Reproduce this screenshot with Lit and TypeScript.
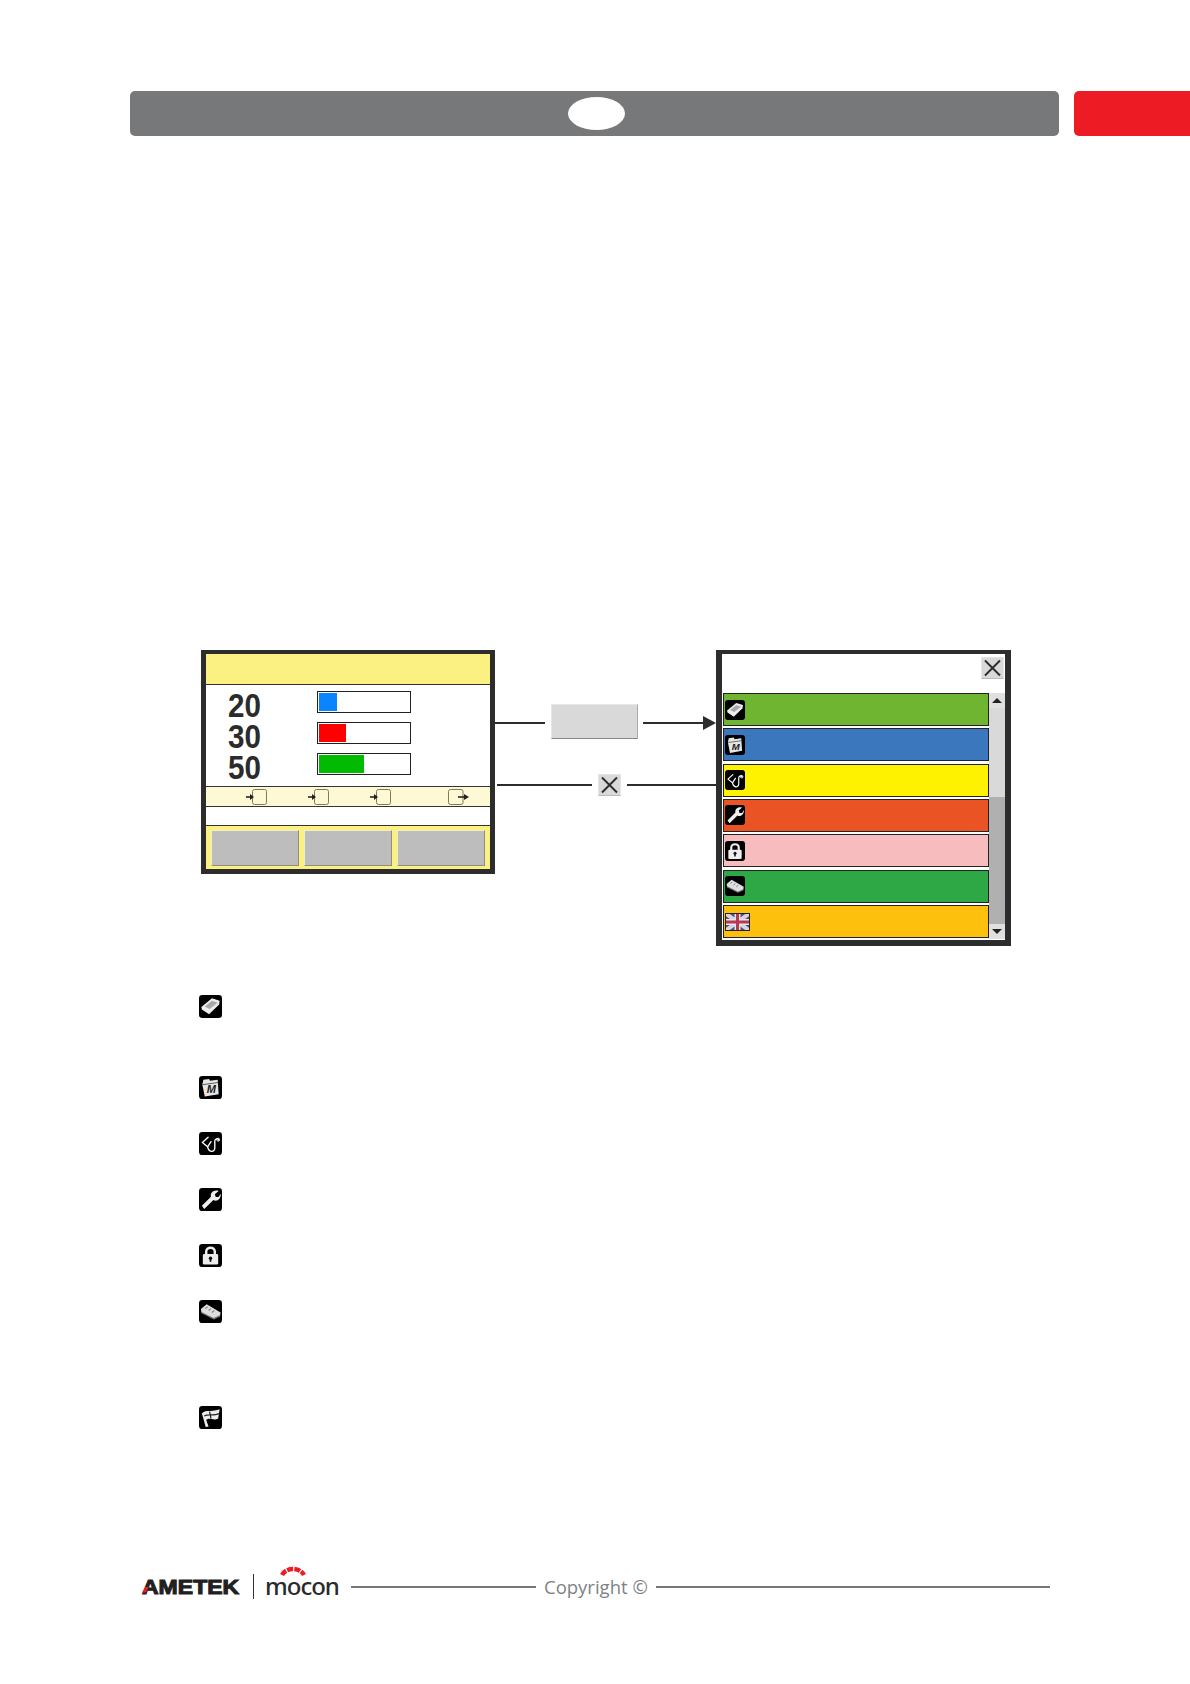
import { LitElement, html, css, svg } from "lit";
import { customElement } from "lit/decorators.js";

const icons: Record<string, unknown> = {
  tray: svg`<path d="M2.5 12.5 13.5 3.5 21.5 6 21 10 10.5 20 3 15Z" fill="#eee"/><path d="M6 12 13.5 6 19.5 8 11 14.5Z" fill="#a9a9a9"/>`,
  folder: svg`<path d="M3.5 9 4.5 4 10.5 3 11.5 5 19.5 4 20.5 19 6 21.5Z" fill="#e6e6e6"/><path d="M4 9 20 6.8" stroke="#555" stroke-width="1" fill="none"/><text x="13" y="17.5" font-family="Liberation Sans, sans-serif" font-size="11.5" font-weight="700" font-style="italic" text-anchor="middle" fill="#222">M</text>`,
  steth: svg`<path d="M9.5 5.5 3.5 11 9 15.5 12.5 10M9 15.5C10 21 16 22 16.5 17L16.5 9.5C16.5 7 20 6 20.5 8.5" fill="none" stroke="#fff" stroke-width="1.4" stroke-linecap="round" stroke-linejoin="round"/><circle cx="20" cy="8" r="1.5" fill="none" stroke="#fff" stroke-width="1"/>`,
  wrench: svg`<path d="M3 18.5 12.5 9C11.5 5 15.5 1.5 20.5 3L16.5 6.5 17.5 9.5 20.5 9.5 22.5 6C23.5 11 18.5 15 15 12.5L5.5 22Z" fill="#efefef"/>`,
  lock: svg`<path d="M7.5 11V8C7.5 2.5 16.5 2.5 16.5 8V11" fill="none" stroke="#eee" stroke-width="2.6"/><rect x="4" y="10.5" width="16" height="11" rx="1.5" fill="#eee"/><circle cx="12" cy="14.8" r="1.8" fill="#111"/><rect x="11.1" y="15" width="1.8" height="3.6" fill="#111"/>`,
  usb: svg`<path d="M2 9.5 8 4.5 22.5 13 22 16.5 15.5 19.5 2.5 13Z" fill="#dedede"/><path d="M2.5 13 15.5 19.5 22 16.5" fill="none" stroke="#777" stroke-width="1.3"/><path d="M6.5 9 9 7M10 11 12.5 9M13.5 13 16 11" stroke="#888" stroke-width="1.2"/>`,
  flag: svg`<path d="M3 7.5C8 3 13 7 21.5 3.5L20 13C15 16 12 11.5 7.5 14.5L10 21.5 7 22Z" fill="#eee"/><path d="M11 5.8 12.5 13M5.5 10.5C10 7.5 14 11 20.8 8" stroke="#222" stroke-width="1.3" fill="none"/>`,
};

const rows = [
  { color: "#6fb532", icon: "tray" },
  { color: "#3b77bc", icon: "folder" },
  { color: "#fff200", icon: "steth" },
  { color: "#ea5323", icon: "wrench" },
  { color: "#f6bcbe", icon: "lock" },
  { color: "#2ea745", icon: "usb" },
  { color: "#fcc00d", icon: "uk" },
];

const levels = [
  { value: 20, color: "#0a84ff" },
  { value: 30, color: "#ff0000" },
  { value: 50, color: "#00bb00" },
];

const legend = [
  { icon: "tray", size: "h81" },
  { icon: "folder", size: "h56" },
  { icon: "steth", size: "h56" },
  { icon: "wrench", size: "h56" },
  { icon: "lock", size: "h56" },
  { icon: "usb", size: "h106" },
  { icon: "flag", size: "h56" },
];

@customElement("app-root")
export class AppRoot extends LitElement {
  static styles = css`
    :host { display: block; width: 1190px; height: 1684px; background: #fff; overflow: hidden; font-family: "Liberation Sans", Arial, sans-serif; }
    .page { display: flex; flex-direction: column; height: 1684px; }

    .header { display: flex; gap: 15px; padding: 91px 0 0 130px; height: 45px; }
    .bar { flex: 0 0 929px; height: 45px; background: #77787a; border-radius: 5px; display: flex; align-items: center; justify-content: center; }
    .oval { width: 57px; height: 33px; background: #fff; border-radius: 50%; margin-left: 4px; }
    .tab { flex: 1; height: 45px; background: #ed1c24; border-radius: 5px 0 0 5px; }

    .diagram { display: flex; align-items: flex-start; margin: 514px 0 0 201px; }

    .left { box-sizing: border-box; width: 294px; height: 224px; border: 5px solid #2d2d2d; border-top-width: 4px; display: flex; flex-direction: column; background: #fff; }
    .l-head { height: 30px; background: #fbf183; border-bottom: 1px solid #333; flex: none; }
    .l-body { height: 101px; flex: none; padding-top: 1px; box-sizing: border-box; }
    .level { display: flex; align-items: center; height: 31px; padding-left: 22px; }
    .num { width: 89px; flex: none; font-size: 34px; font-weight: 700; color: #2b2b2b; line-height: 26px; margin-top: 6px; transform: scaleX(0.87); transform-origin: left center; }
    .track { box-sizing: border-box; width: 94px; height: 22px; border: 1px solid #222; padding: 1px; background: #fff; }
    .fill { height: 100%; }
    .ports { box-sizing: border-box; height: 21px; flex: none; background: #fdf9d5; border-top: 1px solid #333; border-bottom: 1px solid #333; display: flex; align-items: center; gap: 41px; padding-left: 40px; }
    .ports svg { display: block; width: 21px; height: 16px; flex: none; }
    .ports .out { margin-left: 16px; }
    .l-blank { height: 18px; flex: none; border-bottom: 1px solid #333; }
    .l-foot { flex: 1; background: #fbf183; display: flex; gap: 5px; padding: 4px 5px 3px; }
    .l-btn { box-sizing: border-box; flex: 1; background: #bdbdbd; border: 1px solid #f3efc8; border-right-color: #8f8f80; border-bottom-color: #8f8f80; }

    .links { width: 221px; flex: none; display: flex; flex-direction: column; }
    .link { display: flex; align-items: center; }
    .link.one { margin-top: 54px; height: 35px; gap: 6px; }
    .link.two { margin-top: 35px; height: 22px; gap: 6px; padding-left: 2px; }
    .line { height: 2px; background: #2d2d2d; }
    .link.one .line, .link.one .arrow { margin-top: 2px; }
    .w50 { width: 50px; } .w60 { width: 60px; margin-left: -1px; } .w95 { width: 95px; } .w89 { width: 89px; }
    .go { box-sizing: border-box; width: 87px; height: 35px; background: #d9d9d9; border: 1px solid #e6e6e6; border-right-color: #aaa; border-bottom-color: #888; }
    .arrow { width: 0; height: 0; border-left: 13px solid #2d2d2d; border-top: 7.5px solid transparent; border-bottom: 7.5px solid transparent; margin-left: -6px; }
    .x { box-sizing: border-box; width: 23px; height: 22px; background: #d9d9d9; border: 1px solid #e4e4e4; border-bottom-color: #bbb; flex: none; display: block; }
    .x svg { display: block; width: 100%; height: 100%; }

    .right { box-sizing: border-box; width: 295px; height: 296px; border: 6px solid #2d2d2d; border-top-width: 4px; background: #fff; display: flex; flex-direction: column; }
    .r-top { height: 39px; flex: none; display: flex; justify-content: flex-end; padding: 3px 1px 0 0; box-sizing: border-box; }
    .r-main { flex: 1; display: flex; padding-left: 1px; }
    .list { width: 266px; flex: none; height: 245px; display: flex; flex-direction: column; justify-content: space-between; }
    .row { box-sizing: border-box; height: 33px; border: 1px solid #222; display: flex; align-items: center; padding-left: 1px; }
    .row .ic { width: 20px; height: 20px; }
    .row .uk { width: 25px; height: 18px; margin-top: 1px; }
    .ic { display: block; flex: none; }
    .scroll { width: 16px; height: 246px; flex: none; display: flex; flex-direction: column; background: #d9d9d9; }
    .sb { height: 15px; flex: none; background: #e0e0e0; display: flex; align-items: center; justify-content: center; }
    .tri-up { width: 0; height: 0; border-left: 5px solid transparent; border-right: 5px solid transparent; border-bottom: 5px solid #222; }
    .tri-down { width: 0; height: 0; border-left: 5px solid transparent; border-right: 5px solid transparent; border-top: 5px solid #222; }
    .sp { height: 89px; flex: none; }
    .thumb { flex: 1; background: #b0b0b0; }

    .legend { display: flex; flex-direction: column; margin: 49px 0 0 199px; }
    .h81 { height: 81px; } .h56 { height: 56px; } .h106 { height: 106px; }
    .legend .ic { width: 23px; height: 23px; }

    .footer { margin-top: auto; height: 31px; margin-bottom: 82px; display: flex; align-items: center; padding-left: 142px; width: 1050px; box-sizing: border-box; }
    .ametek { position: relative; width: 97px; flex: none; font-size: 19.5px; line-height: 20px; font-weight: 700; color: #231f20; -webkit-text-stroke: 1px #231f20; transform: scaleX(1.18); transform-origin: left center; }
    .ametek i { position: absolute; left: 0; bottom: 4px; width: 6px; height: 6px; background: #ed1c24; clip-path: polygon(55% 0, 100% 0, 55% 100%, 0 100%); }
    .sep { width: 1px; height: 25px; background: #333; margin-left: 14px; flex: none; }
    .mocon { position: relative; margin-left: 11px; width: 75px; flex: none; font-family: "Noto Sans", sans-serif; font-size: 24px; font-weight: 500; line-height: 26px; letter-spacing: -1px; color: #2a2a2a; margin-top: -1px; }
    .mocon svg { position: absolute; left: 15px; top: -9px; width: 26px; height: 12px; display: block; }
    .rule { height: 2px; background: #777; }
    .r1 { width: 185px; margin-left: 11px; flex: none; }
    .copy { font-family: "Open Sans", sans-serif; font-size: 18.5px; color: #808285; margin: 0 8px 0 8px; white-space: nowrap; flex: none; }
    .r2 { flex: 1; }
  `;

  private icon(name: string) {
    return html`<svg class="ic" viewBox="0 0 24 24"><rect width="24" height="24" rx="3.5" fill="#000"/>${icons[name]}</svg>`;
  }

  private uk() {
    return html`<svg class="ic uk" viewBox="0 0 25 18">
      <rect width="25" height="18" fill="#4b4f8c"/>
      <path d="M0 0 25 18M25 0 0 18" stroke="#d9d5dc" stroke-width="4"/>
      <path d="M12.5 0V18M0 9H25" stroke="#e8e4ea" stroke-width="6"/>
      <path d="M12.5 0V18M0 9H25" stroke="#b5394f" stroke-width="3"/>
      <rect x=".5" y=".5" width="24" height="17" fill="none" stroke="#222"/>
    </svg>`;
  }

  private closeBtn() {
    return html`<div class="x"><svg viewBox="0 0 21 20"><path d="M3 2.5 18 17.5M18 2.5 3 17.5" stroke="#2d2d2d" stroke-width="2"/></svg></div>`;
  }

  private port(out: boolean) {
    return out
      ? html`<svg class="out" viewBox="0 0 21 16"><rect x=".5" y=".5" width="14.5" height="15" rx="2" fill="none" stroke="#7a7a5c"/><path d="M10 8H17" stroke="#222" stroke-width="1.6"/><path d="M16 5 21 8 16 11Z" fill="#222"/></svg>`
      : html`<svg viewBox="0 0 21 16"><rect x="6.5" y=".5" width="14" height="15" rx="2" fill="none" stroke="#7a7a5c"/><path d="M0 8H5" stroke="#222" stroke-width="1.6"/><path d="M4 5 8 8 4 11Z" fill="#222"/></svg>`;
  }

  render() {
    return html`<div class="page">
      <div class="header">
        <div class="bar"><div class="oval"></div></div>
        <div class="tab"></div>
      </div>

      <div class="diagram">
        <div class="left">
          <div class="l-head"></div>
          <div class="l-body">
            ${levels.map(
              (l) => html`<div class="level">
                <div class="num">${l.value}</div>
                <div class="track"><div class="fill" style="width:${l.value * 0.9}px;background:${l.color}"></div></div>
              </div>`
            )}
          </div>
          <div class="ports">${this.port(false)}${this.port(false)}${this.port(false)}${this.port(true)}</div>
          <div class="l-blank"></div>
          <div class="l-foot"><div class="l-btn"></div><div class="l-btn"></div><div class="l-btn"></div></div>
        </div>

        <div class="links">
          <div class="link one">
            <div class="line w50"></div><div class="go"></div><div class="line w60"></div><div class="arrow"></div>
          </div>
          <div class="link two">
            <div class="line w95"></div>${this.closeBtn()}<div class="line w89"></div>
          </div>
        </div>

        <div class="right">
          <div class="r-top">${this.closeBtn()}</div>
          <div class="r-main">
            <div class="list">
              ${rows.map(
                (r) => html`<div class="row" style="background:${r.color}">${r.icon === "uk" ? this.uk() : this.icon(r.icon)}</div>`
              )}
            </div>
            <div class="scroll">
              <div class="sb"><div class="tri-up"></div></div>
              <div class="sp"></div>
              <div class="thumb"></div>
              <div class="sb"><div class="tri-down"></div></div>
            </div>
          </div>
        </div>
      </div>

      <div class="legend">
        ${legend.map((l) => html`<div class=${l.size}>${this.icon(l.icon)}</div>`)}
      </div>

      <div class="footer">
        <div class="ametek">AMETEK<i></i></div>
        <div class="sep"></div>
        <div class="mocon">
          <svg viewBox="0 0 26 12"><path d="M2 11C6 3 20 3 24 11" fill="none" stroke="#ed1c24" stroke-width="4.5" stroke-dasharray="6 1.2"/></svg>
          mocon
        </div>
        <div class="rule r1"></div>
        <div class="copy">Copyright ©</div>
        <div class="rule r2"></div>
      </div>
    </div>`;
  }
}
